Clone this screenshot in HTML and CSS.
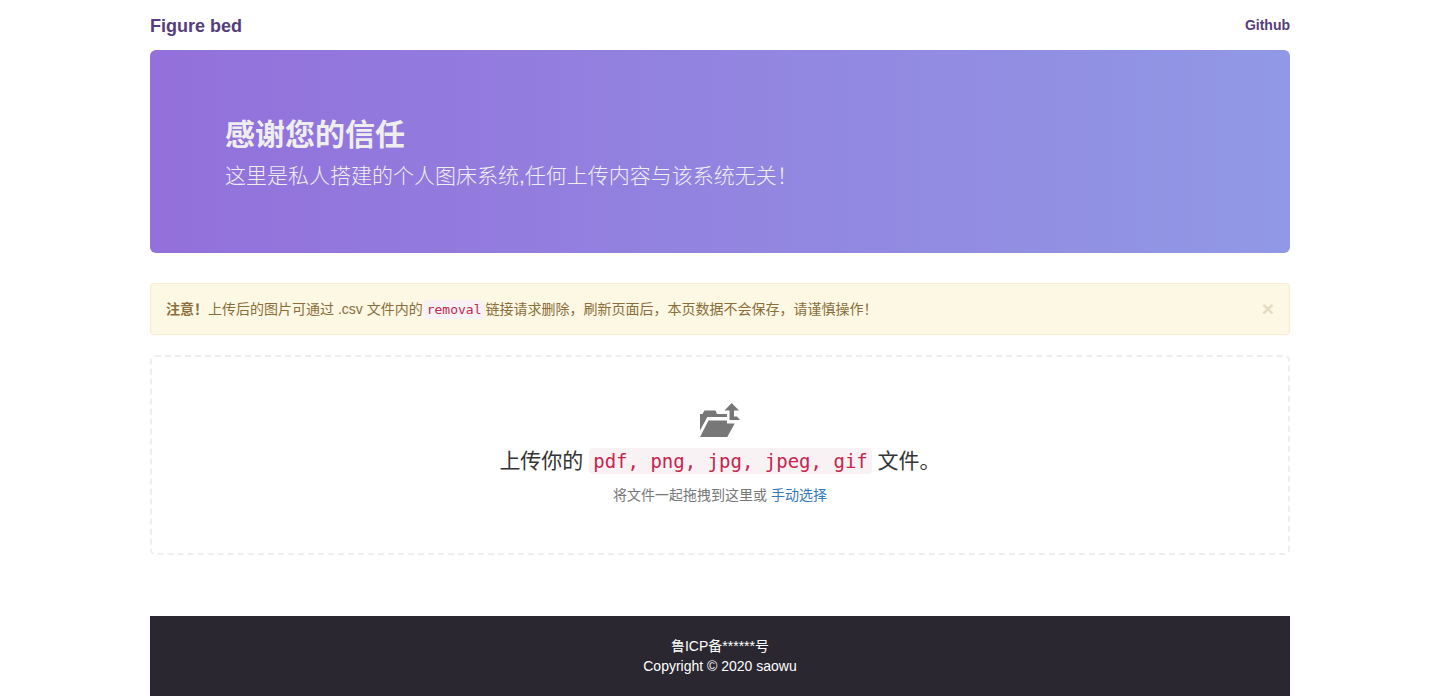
FILE: index.html
```html
<!DOCTYPE html>
<html lang="zh-CN">
<head>
<meta charset="utf-8">
<meta name="viewport" content="width=device-width, initial-scale=1">
<title>Figure bed</title>
<link rel="stylesheet" href="styles.css">
</head>
<body>
<div class="container">
  <header class="navbar">
    <a class="brand" href="#">Figure bed</a>
    <nav><a class="nav-link" href="#">Github</a></nav>
  </header>
  <main>
    <section class="jumbotron">
      <h1 class="jumbotron-title">感谢您的信任</h1>
      <p class="jumbotron-text">这里是私人搭建的个人图床系统,任何上传内容与该系统无关！</p>
    </section>
    <div class="alert" role="alert">
      <p class="alert-text"><strong>注意！</strong>上传后的图片可通过 .csv 文件内的<code class="code">removal</code>链接请求删除，刷新页面后，本页数据不会保存，请谨慎操作！</p>
      <button class="close" type="button" aria-label="Close">×</button>
    </div>
    <section class="dropzone">
      <svg class="upload-icon" viewBox="0 0 40 34" aria-hidden="true">
        <path d="M0 27.500V11H2.500L4.500 7.500H15.500L17 11H27V14H7.300Z"/>
        <path d="M8.500 17.500H27V20.500H34.700L27.300 34H0Z"/>
        <path d="M31.700 0L39 7.500H34V13.500H37L40 17H29.500V7.500H24.500Z"/>
      </svg>
      <h2 class="dropzone-title">上传你的 <code class="code code-large">pdf, png, jpg, jpeg, gif</code> 文件。</h2>
      <p class="dropzone-hint">将文件一起拖拽到这里或 <a class="link" href="#">手动选择</a></p>
    </section>
  </main>
  <footer class="footer">
    <p>鲁ICP备******号</p>
    <p>Copyright © 2020 saowu</p>
  </footer>
</div>
</body>
</html>
```
FILE: styles.css
```css
* { box-sizing: border-box; }
body {
  margin: 0;
  background: #fff;
  color: #333;
  font: 14px/20px "Liberation Sans", "Noto Sans CJK SC", sans-serif;
}
h1, h2, p { margin: 0; }
a { text-decoration: none; }
.container {
  display: flex;
  flex-direction: column;
  max-width: 1170px;
  min-height: 100vh;
  margin: 0 auto;
  padding: 0 15px;
}
.navbar {
  display: flex;
  align-items: center;
  justify-content: space-between;
  height: 50px;
  color: #563d7c;
  font-weight: 700;
}
.brand { padding-top: 2px; color: inherit; font-size: 18px; }
.nav-link { color: inherit; }
.jumbotron {
  margin-bottom: 30px;
  padding: 65px 75px 62px;
  border-radius: 6px;
  background: linear-gradient(to right, #9370db, #9198e5);
  color: #eee;
}
.jumbotron-title {
  margin-bottom: 6px;
  font-size: 30px;
  line-height: 40px;
}
.jumbotron-text {
  font-size: 21px;
  font-weight: 200;
  line-height: 30px;
}
.alert {
  display: flex;
  align-items: center;
  justify-content: space-between;
  margin-bottom: 20px;
  padding: 15px;
  border: 1px solid #faebcc;
  border-radius: 4px;
  background: #fcf8e3;
  color: #8a6d3b;
}
.code {
  padding: 2px 4px;
  border-radius: 4px;
  background: #f9f2f4;
  color: #c7254e;
  font-family: "DejaVu Sans Mono", monospace;
  font-size: 13px;
  line-height: 16px;
}
.close {
  padding: 0;
  border: 0;
  background: none;
  color: #8a6d3b;
  font: 700 21px/20px "Liberation Sans", sans-serif;
  opacity: .2;
  cursor: pointer;
}
.dropzone {
  display: flex;
  flex-direction: column;
  align-items: center;
  min-height: 200px;
  padding: 46px 20px;
  border: 2px dashed #eee;
  border-radius: 5px;
  text-align: center;
}
.upload-icon {
  width: 40px;
  height: 34px;
  margin-bottom: 8px;
  fill: #777;
}
.dropzone-title {
  margin-bottom: 8px;
  font-size: 21px;
  font-weight: 400;
  line-height: 32px;
}
.code-large { font-size: 19px; }
.dropzone-hint { color: #777; }
.link { color: #337ab7; }
.footer {
  margin-top: auto;
  padding: 20px 15px;
  background: #2a2730;
  color: #fff;
  text-align: center;
}
```
